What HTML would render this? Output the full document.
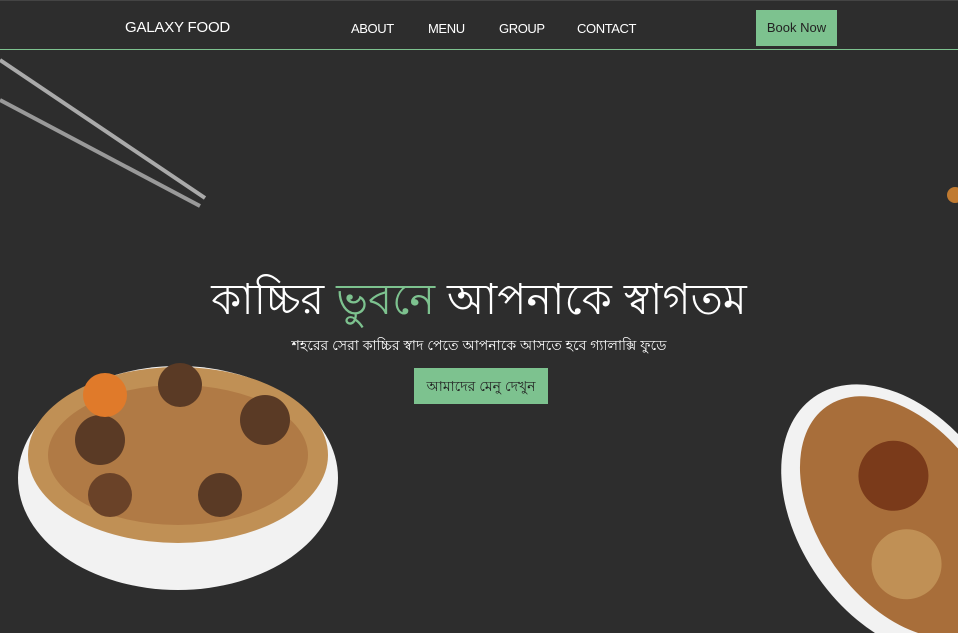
<!DOCTYPE html>
<html><head><meta charset="utf-8"><style>
*{margin:0;padding:0;box-sizing:border-box}
html,body{width:958px;height:633px;overflow:hidden}
body{background:#2d2d2d;position:relative;font-family:"Liberation Sans",sans-serif;color:#fff}
.nav{position:absolute;left:0;top:0;width:958px;height:50px;border-bottom:1.5px solid #7dc28f;border-top:1px solid #444}
.logo{position:absolute;left:125px;top:18px;font-size:15px;letter-spacing:-0.2px}
.nav a{position:absolute;top:20px;font-size:13px;color:#fff;text-decoration:none;letter-spacing:-0.4px}
.btn{position:absolute;left:756px;top:9px;width:81px;height:36px;background:#7dc28f;color:#222;font-size:13px;line-height:36px;text-align:center}
h1{position:absolute;left:0;width:958px;top:268px;text-align:center;font-weight:300;font-size:43px;font-family:"Liberation Sans",sans-serif;white-space:nowrap}
h1 span{color:#7dc28f}
.sub{position:absolute;left:0;width:958px;top:334px;text-align:center;font-size:14px}
.cta{position:absolute;left:414px;top:368px;width:134px;height:36px;background:#7dc28f;color:#222;font-size:14px;line-height:36px;text-align:center}
</style></head><body>
<svg width="958" height="633" style="position:absolute;left:0;top:0">
<line x1="0" y1="60" x2="205" y2="198" stroke="#aaa" stroke-width="4"/>
<line x1="0" y1="100" x2="200" y2="206" stroke="#999" stroke-width="4"/>
<g>
<ellipse cx="178" cy="478" rx="160" ry="112" fill="#f2f2f2"/>
<ellipse cx="178" cy="455" rx="150" ry="88" fill="#c09055"/>
<ellipse cx="178" cy="455" rx="130" ry="70" fill="#b07a45"/>
<circle cx="180" cy="385" r="22" fill="#5a3a25"/>
<circle cx="265" cy="420" r="25" fill="#5a3a25"/>
<circle cx="100" cy="440" r="25" fill="#5a3a25"/>
<circle cx="220" cy="495" r="22" fill="#5a3a25"/>
<circle cx="110" cy="495" r="22" fill="#6a4228"/>
<circle cx="105" cy="395" r="22" fill="#e07a2a"/>
</g>
<g transform="rotate(-35 900 520)">
<ellipse cx="900" cy="520" rx="100" ry="150" fill="#f2f2f2"/>
<ellipse cx="905" cy="520" rx="85" ry="135" fill="#a86e3a"/>
<circle cx="920" cy="480" r="35" fill="#7a3a1a"/>
<circle cx="880" cy="560" r="35" fill="#c09055"/>
</g>
<circle cx="955" cy="195" r="8" fill="#c07a30"/>
</svg>
<div class="nav">
<div class="logo">GALAXY FOOD</div>
<a style="left:351px">ABOUT</a><a style="left:428px">MENU</a><a style="left:499px">GROUP</a><a style="left:577px">CONTACT</a>
<div class="btn">Book Now</div>
</div>
<h1>কাচ্চির <span>ভুবনে</span> আপনাকে স্বাগতম</h1>
<div class="sub">শহরের সেরা কাচ্চির স্বাদ পেতে আপনাকে আসতে হবে গ্যালাক্সি ফুডে</div>
<div class="cta">আমাদের মেনু দেখুন</div>
</body></html>
